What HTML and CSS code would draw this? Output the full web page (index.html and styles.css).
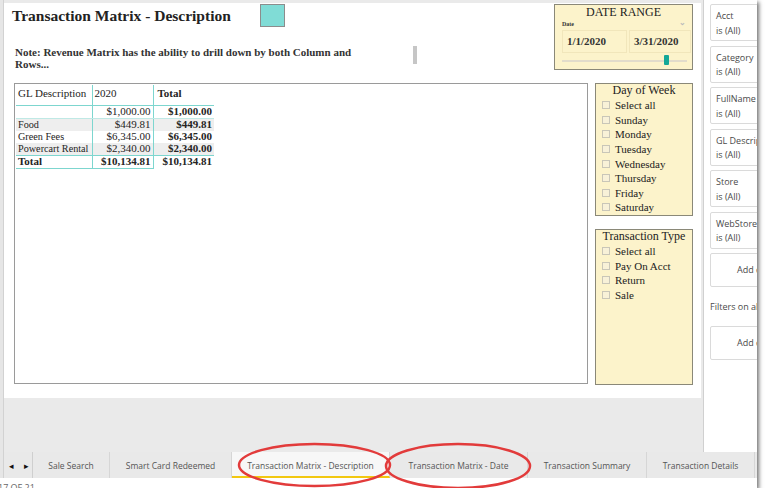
FILE: index.html
```html
<!DOCTYPE html>
<html lang="en">

<head>
    <meta charset="UTF-8">
    <title>Transaction Matrix - Description</title>
    <link rel="stylesheet" href="styles.css">
</head>

<body>

    <div class="window">
        <div class="frame">
            <div class="main">
                <div class="report">
                    <div class="canvas">
                        <div class="top">
                            <div class="head">
                                <div class="title-row">
                                    <div class="title">Transaction Matrix - Description</div>
                                    <div class="swatch"></div>
                                </div>
                                <div class="note-row">
                                    <div class="note">Note: Revenue Matrix has the ability to drill down by both Column and<br>Rows...</div>
                                    <div class="scroll-thumb"></div>
                                </div>
                            </div>

                            <div class="date-range">
                                <div class="dr-title">DATE RANGE</div>
                                <div class="dr-label">
                                    <span>Date</span>
                                    <span class="chev">&#8964;</span>
                                </div>
                                <div class="dr-inputs">
                                    <div class="dr-input">1/1/2020</div>
                                    <div class="dr-input second">3/31/2020</div>
                                </div>
                                <div class="dr-slider">
                                    <div class="dr-thumb"></div>
                                </div>
                            </div>
                        </div>

                        <div class="body">
                            <div class="matrix">
                                <table>
                                    <colgroup>
                                        <col class="w1">
                                        <col class="w2">
                                        <col class="w3">
                                    </colgroup>
                                    <thead>
                                        <tr>
                                            <th class="c1">GL Description</th>
                                            <th class="c2">2020</th>
                                            <th class="c3">Total</th>
                                        </tr>
                                    </thead>
                                    <tbody>
                                        <tr class="blank">
                                            <td class="c1"></td>
                                            <td class="c2">$1,000.00</td>
                                            <td class="c3">$1,000.00</td>
                                        </tr>
                                        <tr class="alt">
                                            <td class="c1">Food</td>
                                            <td class="c2">$449.81</td>
                                            <td class="c3">$449.81</td>
                                        </tr>
                                        <tr>
                                            <td class="c1">Green Fees</td>
                                            <td class="c2">$6,345.00</td>
                                            <td class="c3">$6,345.00</td>
                                        </tr>
                                        <tr class="alt last">
                                            <td class="c1">Powercart Rental</td>
                                            <td class="c2">$2,340.00</td>
                                            <td class="c3">$2,340.00</td>
                                        </tr>
                                        <tr class="total">
                                            <td class="c1">Total</td>
                                            <td class="c2">$10,134.81</td>
                                            <td class="c3">$10,134.81</td>
                                        </tr>
                                    </tbody>
                                </table>
                            </div>

                            <div class="slicers">
                                <div class="slicer dow">
                                    <div class="slicer-title">Day of Week</div>
                                    <div class="item"><span class="box"></span>Select all</div>
                                    <div class="item"><span class="box"></span>Sunday</div>
                                    <div class="item"><span class="box"></span>Monday</div>
                                    <div class="item"><span class="box"></span>Tuesday</div>
                                    <div class="item"><span class="box"></span>Wednesday</div>
                                    <div class="item"><span class="box"></span>Thursday</div>
                                    <div class="item"><span class="box"></span>Friday</div>
                                    <div class="item"><span class="box"></span>Saturday</div>
                                </div>
                                <div class="slicer ttype">
                                    <div class="slicer-title">Transaction Type</div>
                                    <div class="item"><span class="box"></span>Select all</div>
                                    <div class="item"><span class="box"></span>Pay On Acct</div>
                                    <div class="item"><span class="box"></span>Return</div>
                                    <div class="item"><span class="box"></span>Sale</div>
                                </div>
                            </div>
                        </div>
                    </div>
                </div>

                <div class="filters">
                    <div class="card"><div>Acct</div><div>is (All)</div></div>
                    <div class="card"><div>Category</div><div>is (All)</div></div>
                    <div class="card"><div>FullName</div><div>is (All)</div></div>
                    <div class="card"><div>GL Description</div><div>is (All)</div></div>
                    <div class="card"><div>Store</div><div>is (All)</div></div>
                    <div class="card"><div>WebStore</div><div>is (All)</div></div>
                    <div class="card add">Add data fields here</div>
                    <div class="section">Filters on all pages</div>
                    <div class="card add">Add data fields here</div>
                </div>
            </div>

            <div class="tabbar">
                <div class="nav"><span>&#9666;</span><span>&#9656;</span></div>
                <div class="tab t1">Sale Search</div>
                <div class="tab t2">Smart Card Redeemed</div>
                <div class="tab t3 active">Transaction Matrix - Description</div>
                <div class="tab t4">Transaction Matrix - Date</div>
                <div class="tab t5">Transaction Summary</div>
                <div class="tab t6">Transaction Details</div>
            </div>
        </div>

        <div class="status">PAGE 17 OF 21</div>

        <!-- callouts drawn over the tabs -->
        <svg class="marks" width="766" height="496" viewBox="0 0 766 496">
            <ellipse cx="314.5" cy="465" rx="75.5" ry="21" />
            <ellipse cx="458" cy="466" rx="72" ry="22" />
        </svg>
    </div>

</body>

</html>
```

FILE: styles.css
```css
body {
    margin: 0;
    background: #fff;
    font-family: "Liberation Serif", "DejaVu Serif", serif;
    color: #252423;
}

.window {
    position: relative;
    width: 757px;
    height: 488px;
    background: #fff;
    box-shadow: 2px 2px 4px rgba(0, 0, 0, 0.55);
}

.frame {
    background: #e6e6e6;
    padding-left: 3px;
}

.main {
    display: flex;
    height: 452px;
}

.report {
    width: 700px;
    background: #eaeaea;
    padding-top: 3px;
    border-left: 1px solid #d2d2d2;
    box-sizing: border-box;
}

.canvas {
    width: 697px;
    height: 395px;
    background: #fff;
}

/* ---- header ---- */
.top {
    display: flex;
    height: 77px;
}

.head {
    width: 542px;
    margin-left: 8px;
}

.title-row {
    display: flex;
    height: 43px;
}

.title {
    width: 248px;
    font-size: 15.5px;
    font-weight: bold;
    padding-top: 4px;
    color: #222;
}

.swatch {
    width: 23px;
    height: 21px;
    margin-top: 1px;
    background: #80dcd6;
    border: 1px solid #8c8c8c;
}

.note-row {
    display: flex;
    width: 405px;
}

.note {
    flex: 1;
    font-size: 11px;
    font-weight: bold;
    line-height: 12px;
    padding-left: 3px;
    color: #333;
}

.scroll-thumb {
    width: 4px;
    height: 18px;
    background: #c6c6c6;
}

/* ---- date range ---- */
.date-range {
    width: 139px;
    height: 66px;
    margin-top: 1px;
    background: #fcf3cb;
    border: 1px solid #8a8878;
    box-sizing: border-box;
}

.dr-title {
    text-align: center;
    font-size: 12px;
    line-height: 13px;
    padding-top: 1px;
    color: #222;
}

.dr-label {
    display: flex;
    justify-content: space-between;
    font-size: 6px;
    font-weight: bold;
    padding: 2px 6px 0 7px;
    height: 8px;
    color: #333;
}

.chev {
    color: #bbb;
    font-size: 8px;
    line-height: 4px;
}

.dr-inputs {
    display: flex;
    gap: 2px;
    padding-left: 7px;
    margin-top: 1px;
}

.dr-input {
    width: 65px;
    height: 23px;
    border: 1px solid #f1e6bb;
    box-sizing: border-box;
    font-size: 11px;
    font-weight: bold;
    line-height: 21px;
    padding-left: 4px;
    color: #333;
}

.dr-input.second {
    width: 62px;
}

.dr-slider {
    position: relative;
    margin: 7px 0 0 7px;
    width: 125px;
    height: 2px;
    background: #e2dccb;
}

.dr-thumb {
    position: absolute;
    left: 102px;
    top: -5px;
    width: 5px;
    height: 10px;
    border-radius: 1px;
    background: #14a898;
}

/* ---- matrix + slicers ---- */
.body {
    display: flex;
    gap: 7px;
    margin-top: 3px;
    padding-left: 10px;
}

.matrix {
    width: 574px;
    height: 301px;
    border: 1px solid #9a9a9a;
    box-sizing: border-box;
}

table {
    width: 198px;
    table-layout: fixed;
    border-collapse: collapse;
    margin: 1px 0 0 1px;
    font-size: 11px;
    line-height: 11px;
    white-space: nowrap;
}

.w1 { width: 76px; }
.w2 { width: 61px; }
.w3 { width: 61px; }

th {
    font-weight: normal;
    text-align: left;
    vertical-align: top;
    height: 20px;
    padding: 3px 2px 0 2px;
    box-sizing: border-box;
    border-bottom: 1px solid #7dd6cf;
}

td {
    padding: 0 2px 0 0;
    height: 12px;
    text-align: right;
    overflow: hidden;
}

td.c1 {
    text-align: left;
    padding-left: 2px;
    font-size: 10.2px;
}

.c1,
.c2 {
    border-right: 1px solid #7dd6cf;
}

.c3 {
    font-weight: bold;
}

th.c3 {
    padding-left: 4px;
}

.blank td {
    border-bottom: 1px solid #bfe9e5;
}

.alt td {
    background: #eeeeee;
}

.last td {
    border-bottom: 1px solid #7dd6cf;
}

.total td {
    font-weight: bold;
    border-bottom: 1px solid #7dd6cf;
}

.total td.c1 {
    font-size: 11px;
}

.total .c3 {
    border-bottom: none;
}

.slicers {
    display: flex;
    flex-direction: column;
    gap: 13px;
    width: 98px;
}

.slicer {
    background: #fcf3cb;
    border: 1px solid #8a8878;
    box-sizing: border-box;
    padding-left: 6px;
}

.dow {
    height: 133px;
}

.ttype {
    height: 156px;
}

.slicer-title {
    text-align: center;
    font-size: 12px;
    line-height: 13px;
    padding: 0 6px 1px 0;
    color: #222;
}

.item {
    display: flex;
    align-items: center;
    font-size: 11px;
    height: 14.6px;
    color: #222;
}

.box {
    width: 6px;
    height: 6px;
    border: 1px solid #c9c6b8;
    background: #f8f1d8;
    margin-right: 5px;
}

/* ---- filter pane ---- */
.filters {
    flex: 1;
    background: #fff;
    border-left: 1px solid #d0d0d0;
    padding: 4px 0 0 6px;
    overflow: hidden;
    font-family: "Open Sans", "Noto Sans", sans-serif;
    font-size: 9px;
    color: #4a4a4a;
}

.card {
    width: 140px;
    height: 37px;
    margin-bottom: 4.5px;
    padding: 4px 0 0 5px;
    border: 1px solid #dadada;
    border-radius: 2px;
    box-sizing: border-box;
    line-height: 14.5px;
    white-space: nowrap;
}

.card.add {
    height: 34px;
    padding: 0 0 0 26px;
    line-height: 32px;
}

.section {
    height: 34px;
    line-height: 30px;
    margin-top: 1px;
    white-space: nowrap;
}

/* ---- page tabs ---- */
.tabbar {
    display: flex;
    height: 26px;
    background: #e9e9e9;
    border-left: 1px solid #d2d2d2;
    font-family: "Open Sans", "Noto Sans", sans-serif;
    font-size: 8.5px;
    color: #555;
}

.nav {
    display: flex;
    gap: 10px;
    width: 29px;
    padding-left: 5px;
    align-items: center;
    box-sizing: border-box;
    border-right: 1px solid #cfcfcf;
    font-size: 9px;
    color: #111;
}

.tab {
    display: flex;
    align-items: center;
    justify-content: center;
    border-right: 1px solid #d6d6d6;
    box-sizing: border-box;
    white-space: nowrap;
}

.t1 { width: 77px; }
.t2 { width: 122px; }
.t3 { width: 158px; }
.t4 { width: 138px; }
.t5 { width: 119px; }
.t6 { width: 108px; }

.tab.active {
    background: #f7f7f7;
    border-bottom: 2px solid #f2c811;
    padding-top: 2px;
}

.status {
    height: 10px;
    overflow: hidden;
    font-family: "Open Sans", "Noto Sans", sans-serif;
    font-size: 9px;
    line-height: 19px;
    color: #666;
    margin-left: -27px;
}

.marks {
    position: absolute;
    left: 0;
    top: 0;
    overflow: visible;
    pointer-events: none;
}

.marks ellipse {
    fill: none;
    stroke: #e23b3b;
    stroke-width: 2.5;
}
```
